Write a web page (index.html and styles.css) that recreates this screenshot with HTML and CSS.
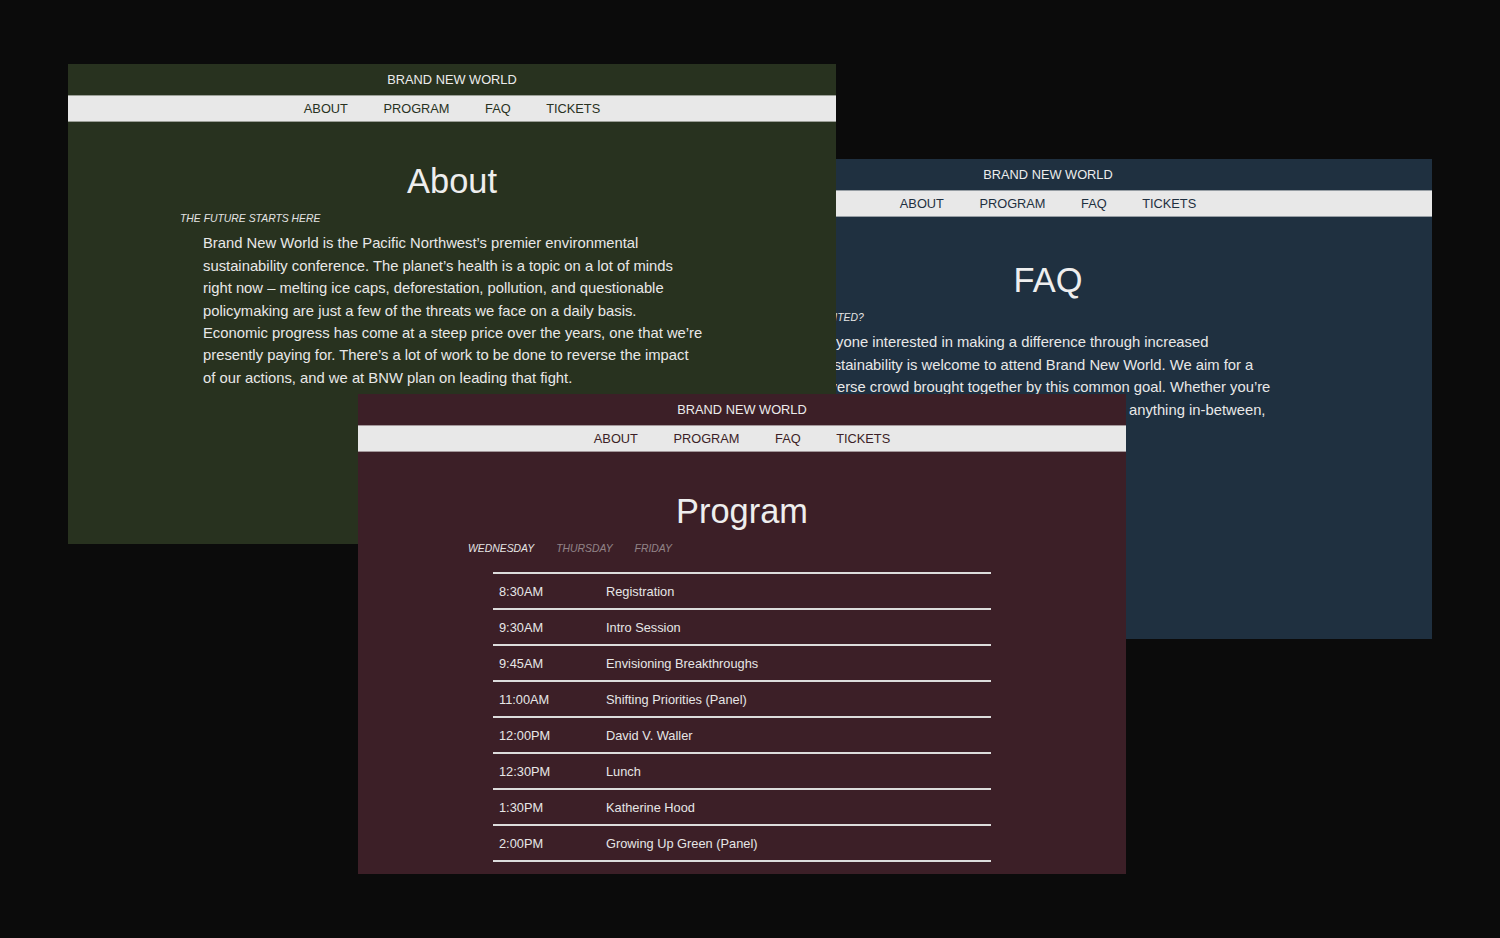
FILE: index.html
```html
<!DOCTYPE html>
<html lang="en">
<head>
<meta charset="utf-8">
<title>Brand New World</title>
<link rel="stylesheet" href="styles.css">
</head>
<body>
<div class="desktop">

  <section class="window window-faq">
    <header class="brand">BRAND NEW WORLD</header>
    <nav class="menu">
      <a>ABOUT</a><a>PROGRAM</a><a>FAQ</a><a>TICKETS</a>
    </nav>
    <main class="page page-faq">
      <h1 class="title">FAQ</h1>
      <div class="content">
        <dl class="faq">
          <dt class="kicker">WHO IS INVITED?</dt>
          <dd class="text answer">Anyone interested in making a difference through increased sustainability is welcome to attend Brand New World. We aim for a diverse crowd brought together by this common goal. Whether you’re a student, a seasoned industry professional, or anything in-between, you belong here.</dd>
        </dl>
      </div>
    </main>
  </section>

  <section class="window window-about">
    <header class="brand">BRAND NEW WORLD</header>
    <nav class="menu">
      <a>ABOUT</a><a>PROGRAM</a><a>FAQ</a><a>TICKETS</a>
    </nav>
    <main class="page">
      <h1 class="title">About</h1>
      <div class="content">
        <p class="kicker">THE FUTURE STARTS HERE</p>
        <p class="text body">Brand New World is the Pacific Northwest’s premier environmental sustainability conference. The planet’s health is a topic on a lot of minds right now – melting ice caps, deforestation, pollution, and questionable policymaking are just a few of the threats we face on a daily basis. Economic progress has come at a steep price over the years, one that we’re presently paying for. There’s a lot of work to be done to reverse the impact of our actions, and we at BNW plan on leading that fight.</p>
      </div>
    </main>
  </section>

  <section class="window window-program">
    <header class="brand">BRAND NEW WORLD</header>
    <nav class="menu">
      <a>ABOUT</a><a>PROGRAM</a><a>FAQ</a><a>TICKETS</a>
    </nav>
    <main class="page">
      <h1 class="title">Program</h1>
      <div class="content">
        <div class="tabs">
          <span class="tab active">WEDNESDAY</span>
          <span class="tab">THURSDAY</span>
          <span class="tab">FRIDAY</span>
        </div>
        <div class="schedule">
          <div class="row"><span class="time">8:30AM</span><span class="event">Registration</span></div>
          <div class="row"><span class="time">9:30AM</span><span class="event">Intro Session</span></div>
          <div class="row"><span class="time">9:45AM</span><span class="event">Envisioning Breakthroughs</span></div>
          <div class="row"><span class="time">11:00AM</span><span class="event">Shifting Priorities (Panel)</span></div>
          <div class="row"><span class="time">12:00PM</span><span class="event">David V. Waller</span></div>
          <div class="row"><span class="time">12:30PM</span><span class="event">Lunch</span></div>
          <div class="row"><span class="time">1:30PM</span><span class="event">Katherine Hood</span></div>
          <div class="row"><span class="time">2:00PM</span><span class="event">Growing Up Green (Panel)</span></div>
          <div class="row"><span class="time">3:00PM</span><span class="event">Workshops</span></div>
        </div>
      </div>
    </main>
  </section>

</div>
</body>
</html>
```

FILE: styles.css
```css
* { box-sizing: border-box; }

html, body {
  margin: 0;
  padding: 0;
  background: #0b0b0b;
}

body {
  width: 1500px;
  height: 938px;
  overflow: hidden;
  font-family: "Liberation Sans", Arial, sans-serif;
  color: #e6e6e6;
}

.desktop {
  position: relative;
  width: 1500px;
  height: 938px;
}

/* windows placed on the canvas */
.window {
  position: absolute;
  width: 768px;
  height: 480px;
  overflow: hidden;
  background: var(--bg);
  color: #e8e8e8;
}

.window-about { --bg: #28321f; left: 68px; top: 64px; z-index: 2; }
.window-faq { --bg: #1f3040; left: 664px; top: 159px; z-index: 1; }
.window-program { --bg: #3c1f27; left: 358px; top: 394px; z-index: 3; }

.brand {
  height: 31px;
  line-height: 31px;
  text-align: center;
  font-size: 12.8px;
  color: #ececec;
}

.menu {
  height: 27px;
  display: flex;
  justify-content: center;
  gap: 35.5px;
  background: #e8e8e8;
  background-clip: padding-box;
  border-top: 1px solid rgba(232, 232, 232, 0.6);
  border-bottom: 1px solid rgba(232, 232, 232, 0.6);
}

.menu a {
  font-size: 12.8px;
  line-height: 25px;
  color: var(--bg);
}

.page {
  padding-top: 39px;
}

.page-faq {
  padding-top: 43px;
}

.title {
  margin: 0;
  font-size: 34.4px;
  font-weight: normal;
  line-height: 40px;
  text-align: center;
  color: #eeeeee;
}

.content {
  width: 544px;
  margin: 10.5px auto 0;
}

.kicker {
  margin: 0;
  font-size: 10.4px;
  line-height: 13px;
  font-style: italic;
  color: #e4e4e4;
}

.text {
  font-size: 14.8px;
  line-height: 22.4px;
  color: #e8e8e8;
}

.body {
  margin: 7.8px 0 0;
  padding: 0 21px 0 23px;
}

.faq {
  margin: 0;
}

.answer {
  margin: 7.8px 0 0 42px;
  width: 458px;
}

.tabs {
  display: flex;
  gap: 22px;
  margin: 3px 0 0 -2px;
}

.tab {
  font-size: 10.4px;
  line-height: 13px;
  font-style: italic;
  color: rgba(232, 232, 232, 0.5);
}

.tab.active {
  color: #e4e4e4;
}

.schedule {
  margin: 17.5px 23px 0;
  border-top: 2px solid #dcdcdc;
}

.row {
  display: grid;
  grid-template-columns: 113px 1fr;
  height: 36px;
  align-items: center;
  border-bottom: 2px solid #dcdcdc;
  font-size: 12.8px;
  color: #e6e6e6;
}

.time {
  padding-left: 6px;
}
```
